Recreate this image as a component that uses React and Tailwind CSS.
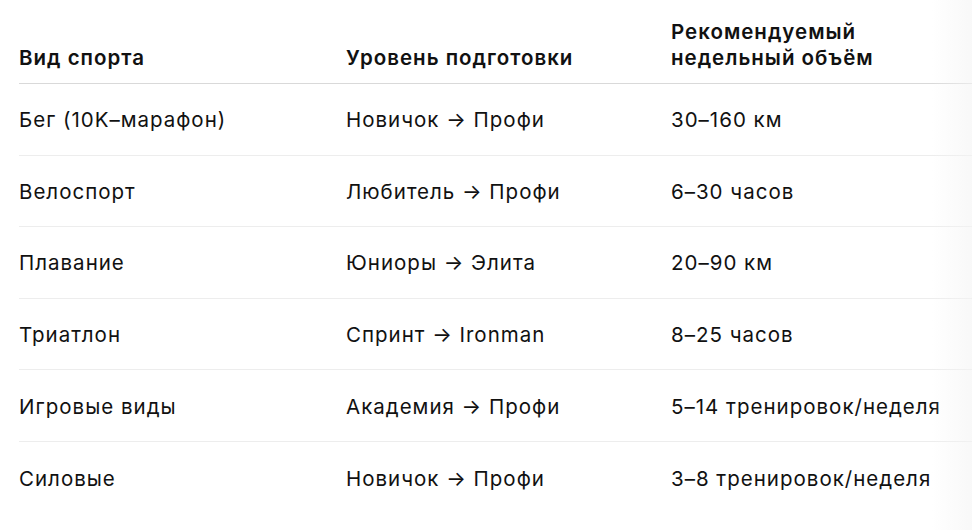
import React from "react";

const rows = [
  ["Бег (10K–марафон)", "Новичок → Профи", "30–160 км"],
  ["Велоспорт", "Любитель → Профи", "6–30 часов"],
  ["Плавание", "Юниоры → Элита", "20–90 км"],
  ["Триатлон", "Спринт → Ironman", "8–25 часов"],
  ["Игровые виды", "Академия → Профи", "5–14 тренировок/неделя"],
  ["Силовые", "Новичок → Профи", "3–8 тренировок/неделя"],
];

function App() {
  return (
    <div className="relative w-[972px] h-[530px] overflow-hidden bg-white font-['Inter',sans-serif] text-[#111] text-[20.5px] tracking-[1px]">
      <div className="pl-[19px]">
        <div className="grid grid-cols-[327px_325px_1fr] items-end border-b border-[#d9d9d9] pt-[19px] pb-[12px] leading-[26px] font-semibold">
          <div>Вид спорта</div>
          <div>Уровень подготовки</div>
          <div>
            Рекомендуемый
            <br />
            недельный объём
          </div>
        </div>
        {rows.map((r, i) => (
          <div
            key={i}
            className={
              "grid grid-cols-[327px_325px_1fr] items-center h-[71.6px] pt-[2px] leading-[28px] " +
              (i < rows.length - 1 ? "border-b border-[#ededed]" : "")
            }
          >
            <div>{r[0]}</div>
            <div>{r[1]}</div>
            <div className="whitespace-nowrap">{r[2]}</div>
          </div>
        ))}
      </div>
      <div className="absolute top-0 right-0 h-full w-[40px] bg-gradient-to-r from-transparent to-[#f4f4f4]/60" />
    </div>
  );
}

export default App;
